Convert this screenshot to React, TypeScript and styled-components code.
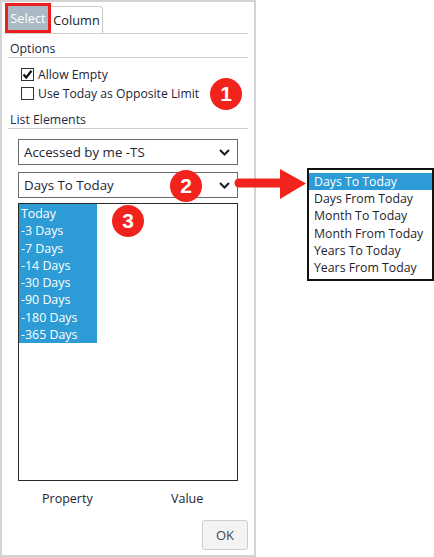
import React from "react";
import styled, { createGlobalStyle } from "styled-components";

const Global = createGlobalStyle`
  html, body { margin: 0; padding: 0; background: #fff; }
  body { font-family: "Open Sans", "Noto Sans", sans-serif; font-size: 12.5px; color: #222; }
  * { box-sizing: border-box; }
`;

const Page = styled.div`
  position: relative;
  width: 434px;
  height: 557px;
  display: flex;
  background: #fff;
  overflow: hidden;
`;

const Panel = styled.div`
  width: 256px;
  height: 557px;
  border: 2px solid #d3d3d3;
  display: flex;
  flex-direction: column;
  padding: 2px 6px 0 3px;
`;

const TabBar = styled.div`
  display: flex;
  align-items: flex-end;
  height: 30px;
  border-bottom: 1px solid #cfcfcf;
`;

const Tab = styled.div<{ $active?: boolean }>`
  display: flex;
  align-items: center;
  justify-content: center;
  font-size: 12.8px;
  ${(p) =>
    p.$active
      ? `
    width: 46px;
    height: 30px;
    border: 3px solid #ec1f1f;
    background: #a9bac6;
    color: #fff;
  `
      : `
    width: 52px;
    height: 27px;
    border: 1px solid #c9c9c9;
    border-bottom: none;
    border-left: none;
    border-top-right-radius: 4px;
    color: #222;
  `}
`;

const Body = styled.div`
  display: flex;
  flex-direction: column;
  padding-left: 3px;
  flex: 1;
`;

const SectionHeader = styled.div<{ $h: number }>`
  height: ${(p) => p.$h}px;
  display: flex;
  align-items: flex-end;
  padding: 0 0 0 2px;
  border-bottom: 1px solid #cfcfcf;
  font-size: 12.3px;
  color: #1e2a44;
`;

const CheckList = styled.div`
  display: flex;
  flex-direction: column;
  padding: 7px 0 0 13px;
`;

const CheckRow = styled.label`
  display: flex;
  align-items: center;
  height: 19px;
  gap: 4px;
  font-size: 12.2px;
  color: #1e2433;
`;

const Box = styled.span`
  width: 13px;
  height: 13px;
  border: 1px solid #333;
  background: #fff;
  display: flex;
  align-items: center;
  justify-content: center;
`;

const Controls = styled.div`
  display: flex;
  flex-direction: column;
  padding: 10px 0 0 10px;
  width: 230px;
`;

const SelectBox = styled.div<{ $mt?: number }>`
  height: 26px;
  width: 220px;
  margin-top: ${(p) => p.$mt ?? 0}px;
  border: 1.5px solid #6a6a6a;
  display: flex;
  align-items: center;
  justify-content: space-between;
  padding: 0 7px 0 5px;
  font-size: 13.3px;
  color: #1e2433;
`;

const ListBox = styled.div`
  margin-top: 5px;
  width: 220px;
  height: 278px;
  border: 1.5px solid #2a2a2a;
  display: flex;
  flex-direction: column;
  align-items: flex-start;
`;

const SelectedBlock = styled.div`
  width: 78px;
  background: #2d9bd6;
  display: flex;
  flex-direction: column;
  padding: 1px 0 0 2px;
`;

const ListItem = styled.div`
  height: 17.3px;
  line-height: 17.3px;
  color: #fff;
  font-size: 12.4px;
`;

const Footer = styled.div`
  display: flex;
  width: 220px;
  margin-top: 8px;
  height: 18px;
  align-items: center;
  font-size: 12.5px;
  color: #1e2433;
`;

const FooterCell = styled.div<{ $pl: number; $w: number }>`
  width: ${(p) => p.$w}px;
  padding-left: ${(p) => p.$pl}px;
`;

const ButtonRow = styled.div`
  display: flex;
  justify-content: flex-end;
  padding-top: 13px;
`;

const OkButton = styled.button`
  width: 46px;
  height: 30px;
  border: 1px solid #cdcdcd;
  border-radius: 3px;
  background: #f3f3f3;
  font-family: inherit;
  font-size: 13px;
  color: #444;
  padding: 0;
`;

const Right = styled.div`
  flex: 1;
  display: flex;
  justify-content: flex-end;
  padding-top: 168px;
`;

const Popup = styled.div`
  width: 127px;
  height: 113px;
  border: 2px solid #111;
  padding: 3px 0 0 0;
  display: flex;
  flex-direction: column;
  background: #fff;
`;

const PopupItem = styled.div<{ $sel?: boolean }>`
  height: 17.2px;
  line-height: 17.2px;
  padding-left: 5px;
  font-size: 12.3px;
  white-space: nowrap;
  background: ${(p) => (p.$sel ? "#2d9bd6" : "transparent")};
  color: ${(p) => (p.$sel ? "#fff" : "#1e1e2c")};
`;

const Badge = styled.div<{ $x: number; $y: number }>`
  position: absolute;
  left: ${(p) => p.$x - 16}px;
  top: ${(p) => p.$y - 16}px;
  width: 32px;
  height: 32px;
  border-radius: 50%;
  background: #f2231d;
  color: #fff;
  font-family: "Liberation Sans", Arial, sans-serif;
  font-weight: bold;
  font-size: 21px;
  display: flex;
  align-items: center;
  justify-content: center;
`;

const ArrowSvg = styled.svg`
  position: absolute;
  left: 230px;
  top: 165px;
`;

const Chevron = () => (
  <svg width="11" height="7" viewBox="0 0 11 7">
    <polyline points="1,1 5.5,5.5 10,1" fill="none" stroke="#1a1a2a" strokeWidth="2" />
  </svg>
);

const days = ["Today", "-3 Days", "-7 Days", "-14 Days", "-30 Days", "-90 Days", "-180 Days", "-365 Days"];
const options = [
  "Days To Today",
  "Days From Today",
  "Month To Today",
  "Month From Today",
  "Years To Today",
  "Years From Today",
];

export default function App() {
  return (
    <Page>
      <Global />
      <Panel>
        <TabBar>
          <Tab $active>Select</Tab>
          <Tab>Column</Tab>
        </TabBar>
        <Body>
          <SectionHeader $h={24}>Options</SectionHeader>
          <CheckList>
            <CheckRow>
              <Box>
                <svg width="11" height="11" viewBox="0 0 11 11">
                  <polyline points="1.5,5.5 4.2,8.5 9.5,1.8" fill="none" stroke="#111" strokeWidth="2.2" />
                </svg>
              </Box>
              Allow Empty
            </CheckRow>
            <CheckRow>
              <Box />
              Use Today as Opposite Limit
            </CheckRow>
          </CheckList>
          <SectionHeader $h={26}>List Elements</SectionHeader>
          <Controls>
            <SelectBox>
              Accessed by me -TS
              <Chevron />
            </SelectBox>
            <SelectBox $mt={7}>
              Days To Today
              <Chevron />
            </SelectBox>
            <ListBox>
              <SelectedBlock>
                {days.map((d) => (
                  <ListItem key={d}>{d}</ListItem>
                ))}
              </SelectedBlock>
            </ListBox>
            <Footer>
              <FooterCell $w={110} $pl={24}>Property</FooterCell>
              <FooterCell $w={110} $pl={43}>Value</FooterCell>
            </Footer>
          </Controls>
          <ButtonRow>
            <OkButton>OK</OkButton>
          </ButtonRow>
        </Body>
      </Panel>
      <Right>
        <Popup>
          {options.map((o, i) => (
            <PopupItem key={o} $sel={i === 0}>
              {o}
            </PopupItem>
          ))}
        </Popup>
      </Right>
      <ArrowSvg width="80" height="40" viewBox="0 0 80 40">
        <line x1="9" y1="18" x2="52" y2="18" stroke="#f2231d" strokeWidth="9" strokeLinecap="round" />
        <polygon points="50,4 76,18.5 50,34" fill="#f2231d" />
      </ArrowSvg>
      <Badge $x={226} $y={94}>1</Badge>
      <Badge $x={186} $y={186}>2</Badge>
      <Badge $x={128} $y={221}>3</Badge>
    </Page>
  );
}
